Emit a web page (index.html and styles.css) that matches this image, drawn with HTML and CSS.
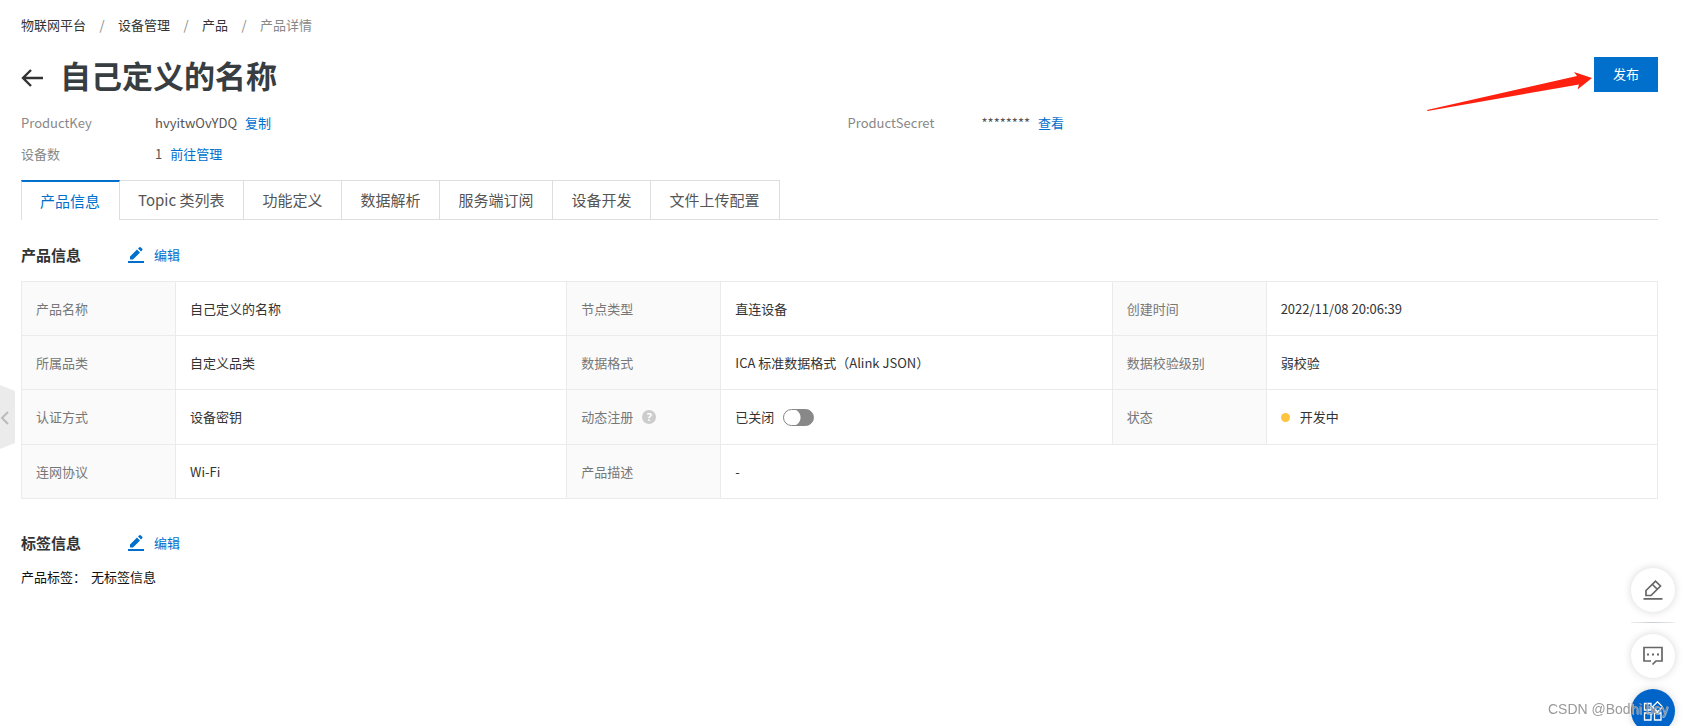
FILE: index.html
```html
<!DOCTYPE html>
<html lang="zh-CN">
<head>
<meta charset="utf-8">
<title>产品详情</title>
<meta name="viewport" content="width=device-width, initial-scale=1">
<link rel="stylesheet" href="styles.css">
</head>
<body>
<main class="page">
  <nav class="breadcrumb" aria-label="breadcrumb">
    <a href="#">物联网平台</a><span class="sep">/</span>
    <a href="#">设备管理</a><span class="sep">/</span>
    <a href="#">产品</a><span class="sep">/</span>
    <span class="current">产品详情</span>
  </nav>

  <header class="header">
    <button class="back" type="button" aria-label="返回">
      <svg width="22" height="18" viewBox="0 0 22 18" fill="none" stroke="#333" stroke-width="2.400"><path d="M22 9H2M10 1L2 9l8 8"/></svg>
    </button>
    <h1 class="title">自己定义的名称</h1>
    <div class="publish">
      <svg class="pointer" width="165" height="40" viewBox="0 0 165 40"><path d="M0 38L150 4L147 0L165 6L150.500 17.500L152 12.500L0.500 39Z" fill="#ff2010"/></svg>
      <button class="primary" type="button">发布</button>
    </div>
  </header>

  <dl class="meta">
    <div class="meta-item"><dt>ProductKey</dt><dd>hvyitwOvYDQ <a class="link" href="#">复制</a></dd></div>
    <div class="meta-item"><dt>ProductSecret</dt><dd>******** <a class="link" href="#">查看</a></dd></div>
    <div class="meta-item"><dt>设备数</dt><dd>1 <a class="link" href="#">前往管理</a></dd></div>
  </dl>

  <div class="tabs" role="tablist">
    <button class="tab active" type="button" role="tab" aria-selected="true">产品信息</button>
    <button class="tab" type="button" role="tab">Topic 类列表</button>
    <button class="tab" type="button" role="tab">功能定义</button>
    <button class="tab" type="button" role="tab">数据解析</button>
    <button class="tab" type="button" role="tab">服务端订阅</button>
    <button class="tab" type="button" role="tab">设备开发</button>
    <button class="tab" type="button" role="tab">文件上传配置</button>
  </div>

  <section>
    <div class="section-head">
      <h2>产品信息</h2>
      <a class="edit" href="#"><svg width="16" height="16" viewBox="0 0 16 16" fill="#0070cc"><path d="M0 14h16v2H0zM2 12.500V9.500L9 2.500l3 3L5 12.500zM10 1.600L11 .6q1-1 2 0l1 1q1 1 0 2l-1 1z"/></svg>编辑</a>
    </div>
    <table class="info">
      <tbody>
        <tr>
          <th scope="row">产品名称</th><td>自己定义的名称</td>
          <th scope="row">节点类型</th><td>直连设备</td>
          <th scope="row">创建时间</th><td>2022/11/08 20:06:39</td>
        </tr>
        <tr>
          <th scope="row">所属品类</th><td>自定义品类</td>
          <th scope="row">数据格式</th><td>ICA 标准数据格式（Alink JSON）</td>
          <th scope="row">数据校验级别</th><td>弱校验</td>
        </tr>
        <tr class="tall">
          <th scope="row">认证方式</th><td>设备密钥</td>
          <th scope="row"><span class="inline">动态注册<span class="help">?</span></span></th>
          <td><label class="inline">已关闭<input class="switch" type="checkbox" role="switch"></label></td>
          <th scope="row">状态</th><td><span class="inline"><i class="dot"></i>开发中</span></td>
        </tr>
        <tr>
          <th scope="row">连网协议</th><td>Wi-Fi</td>
          <th scope="row">产品描述</th><td colspan="3">-</td>
        </tr>
      </tbody>
    </table>
  </section>

  <section class="labels">
    <div class="section-head">
      <h2>标签信息</h2>
      <a class="edit" href="#"><svg width="16" height="16" viewBox="0 0 16 16" fill="#0070cc"><path d="M0 14h16v2H0zM2 12.500V9.500L9 2.500l3 3L5 12.500zM10 1.600L11 .6q1-1 2 0l1 1q1 1 0 2l-1 1z"/></svg>编辑</a>
    </div>
    <p class="label-row"><span>产品标签：</span><span>无标签信息</span></p>
  </section>
</main>

<button class="collapse" type="button" aria-label="收起">
  <svg width="15" height="64" viewBox="0 0 15 64"><path d="M0 0L15 6V58L0 64Z" fill="#ebebeb"/><path d="M8 27L2 33l6 6" fill="none" stroke="#bbb" stroke-width="2"/></svg>
</button>

<aside class="float-bar">
  <button class="float" type="button" aria-label="反馈">
    <svg width="20" height="20" viewBox="0 0 20 20" fill="none" stroke="#666" stroke-width="1.700"><path d="M.5 18.800H19.500M3 15.500V10.500L12.500 1.200L17.500 6L8 15.500ZM9.500 4.500L14 9"/></svg>
  </button>
  <hr>
  <button class="float" type="button" aria-label="咨询">
    <svg width="20" height="20" viewBox="0 0 20 20" fill="none" stroke="#666" stroke-width="1.700"><path d="M8 15H1V1.500H19V15H13L9.500 18.500"/><path d="M4 7.500h2v2H4zM9 7.500h2v2H9zM14 7.500h2v2h-2z" fill="#666" stroke="none"/></svg>
  </button>
  <button class="float blue" type="button" aria-label="应用">
    <svg width="20" height="20" viewBox="0 0 20 20" fill="none" stroke="#fff" stroke-width="1.300"><path d="M1.500 2.500h6.500v6.500h-6.500zM1.500 12h6.500v7h-6.500zM11.500 12h6.500v7h-6.500zM14.500 .8L19.500 5.800L14.500 10.800L9.500 5.800Z"/></svg>
  </button>
</aside>
<div class="watermark">CSDN @Bodhi boy</div>
</body>
</html>
```

FILE: styles.css
```css
* { box-sizing: border-box; }

body {
  margin: 0;
  background: #fff;
  color: #333;
  font: 13px/20px "Noto Sans CJK SC", sans-serif;
}

button {
  padding: 0;
  border: 0;
  background: none;
  font: inherit;
  color: inherit;
  cursor: pointer;
}

a { color: inherit; text-decoration: none; }
svg { display: block; }

.page { padding: 15px 26px 16px 21px; }

.breadcrumb { display: flex; }
.sep { width: 32px; text-align: center; color: #888; }
.current { color: #888; }

.header { display: flex; align-items: center; margin-top: 16px; height: 48px; }
.back { margin-top: 6px; }
.title { margin: 0 0 0 17px; font-size: 31px; line-height: 48px; color: #373d41; }
.publish { position: relative; margin: 0 0 2px auto; }
.primary {
  display: block;
  width: 64px;
  height: 35px;
  background: #0070cc;
  color: #fff;
}
.pointer { position: absolute; right: 66px; top: 15px; }

.meta {
  display: grid;
  grid-template-columns: 1fr 1fr;
  gap: 11px 16px;
  margin: 14px 0 0;
}
.meta-item { display: flex; }
dt { width: 134px; color: #888; }
dd { display: flex; gap: 8px; margin: 0; color: #555; }
.link { color: #0070cc; }

.tabs { display: flex; margin-top: 16px; border-bottom: 1px solid #dedede; }
.tab {
  height: 39px;
  padding: 0 19px 0 18px;
  border-top: 1px solid #dedede;
  border-right: 1px solid #dedede;
  font-size: 15px;
  color: #555;
}
.tab.active {
  height: 40px;
  margin-bottom: -1px;
  border-top: 2px solid #0070cc;
  border-left: 1px solid #dedede;
  background: #fff;
  color: #0070cc;
}

.section-head { display: flex; align-items: center; margin-top: 23px; height: 24px; }
h2 { width: 107px; margin: 0; font-size: 15px; line-height: 24px; font-weight: 700; }
.edit { display: flex; align-items: center; gap: 10px; color: #0070cc; }

.info {
  width: 100%;
  margin-top: 14px;
  border-collapse: collapse;
  table-layout: fixed;
}
.info th, .info td {
  height: 54px;
  padding: 0 14px;
  border: 1px solid #ebebeb;
  text-align: left;
  font-weight: 400;
}
.info .tall th, .info .tall td { height: 55px; }
.info th { width: 154px; background: #fafafa; color: #777; }
.inline { display: flex; align-items: center; }
.help {
  width: 14px;
  height: 14px;
  margin-left: 9px;
  border-radius: 50%;
  background: #ccc;
  color: #fff;
  font: 700 11px/14px "Open Sans", sans-serif;
  text-align: center;
}
.switch {
  appearance: none;
  width: 31px;
  height: 17px;
  margin: 0 0 0 9px;
  border: 1px solid #888;
  border-radius: 9px;
  background: radial-gradient(circle at 8px 50%, #fff 8px, #888 9px);
}
.dot {
  width: 9px;
  height: 9px;
  margin-right: 10px;
  border-radius: 50%;
  background: #ffc440;
}

.labels { margin-top: 32px; }
.label-row { display: flex; gap: 5px; margin: 12px 0 0; color: #111; }

.collapse { position: fixed; left: 0; top: 385px; }

.float-bar {
  position: fixed;
  right: 9px;
  bottom: -7px;
  display: flex;
  flex-direction: column;
}
.float {
  display: grid;
  place-items: center;
  width: 44px;
  height: 44px;
  border-radius: 50%;
  background: #fff;
  box-shadow: 0 0 8px rgba(0, 0, 0, .16);
}
.float.blue { margin-top: 11px; background: #0064c8; }
.float-bar hr {
  width: 44px;
  height: 1px;
  margin: 10px 0 11px;
  border: 0;
  background: linear-gradient(90deg, #eee, #c8ccd4, #eee);
}

.watermark {
  position: fixed;
  right: 16px;
  bottom: 7px;
  color: #999;
  font: 14px/20px "Liberation Sans", Arial, sans-serif;
  text-shadow: 1px 1px 0 rgba(255, 255, 255, .5);
}
```
